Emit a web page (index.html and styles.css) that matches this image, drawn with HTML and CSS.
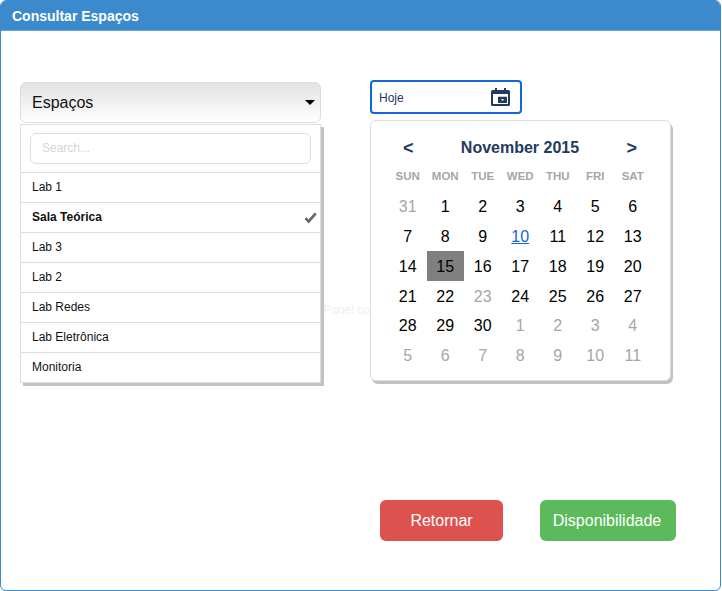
FILE: index.html
```html
<!DOCTYPE html>
<html>
	<head>
		<meta charset="utf-8">
		<title>Consultar Espaços</title>
		<link rel="stylesheet" href="styles.css">
	</head>
	<body>
		<div class="panel">
			<div class="panel-heading">Consultar Espaços</div>
			<div class="panel-body">
				<div class="top-row">
					<div class="left-col">
						<div class="select-btn">
							<span>Espaços</span>
							<span class="caret"></span>
						</div>
						<div class="select-menu">
							<div class="search-row">
								<div class="search-box">Search...</div>
							</div>
							<div class="opt">Lab 1</div>
							<div class="opt selected">
								Sala Teórica
								<svg class="check" width="13" height="12" viewBox="0 0 13 12"><path d="M0.500 7l2-1.800 2 2.200L10.800 .5l1.900 1.700-8 9.300z" fill="#666"/></svg>
							</div>
							<div class="opt">Lab 3</div>
							<div class="opt">Lab 2</div>
							<div class="opt">Lab Redes</div>
							<div class="opt">Lab Eletrônica</div>
							<div class="opt">Monitoria</div>
						</div>
					</div>
					<div class="behind">Panel content</div>
					<div class="right-col">
						<div class="date-input">
							<span>Hoje</span>
							<svg width="19" height="18" viewBox="0 0 19 18"><path d="M4 0h2v2h7V0h2v2h2.500A1.500 1.500 0 0 1 19 3.500v13a1.500 1.500 0 0 1-1.500 1.500h-16A1.500 1.500 0 0 1 0 16.500v-13A1.500 1.500 0 0 1 1.500 2H4zM2 6v10h15V6z" fill="#243a5e"/><path d="M7 8.700h9V15H7z" fill="#243a5e"/><path d="M10.500 11h2v1.500h-2z" fill="#fff"/></svg>
						</div>
						<div class="calendar">
							<div class="cal-head">
								<span class="nav">&lt;</span>
								<span class="month">November 2015</span>
								<span class="nav">&gt;</span>
							</div>
							<div class="cal-grid weekdays">
								<span>SUN</span><span>MON</span><span>TUE</span><span>WED</span><span>THU</span><span>FRI</span><span>SAT</span>
							</div>
							<div class="cal-grid days">
								<span class="off">31</span><span>1</span><span>2</span><span>3</span><span>4</span><span>5</span><span>6</span>
								<span>7</span><span>8</span><span>9</span><span class="today">10</span><span>11</span><span>12</span><span>13</span>
								<span>14</span><span class="picked">15</span><span>16</span><span>17</span><span>18</span><span>19</span><span>20</span>
								<span>21</span><span>22</span><span class="off">23</span><span>24</span><span>25</span><span>26</span><span>27</span>
								<span>28</span><span>29</span><span>30</span><span class="off">1</span><span class="off">2</span><span class="off">3</span><span class="off">4</span>
								<span class="off">5</span><span class="off">6</span><span class="off">7</span><span class="off">8</span><span class="off">9</span><span class="off">10</span><span class="off">11</span>
							</div>
						</div>
					</div>
				</div>
				<div class="actions">
					<button class="btn red">Retornar</button>
					<button class="btn green">Disponibilidade</button>
				</div>
			</div>
		</div>
	</body>
</html>
```

FILE: styles.css
```css
html, body {
	margin: 0;
	padding: 0;
	background: #ffffff;
}
body {
	font-family: "Liberation Sans", Arial, sans-serif;
	color: #000000;
}
.panel {
	width: 721px;
	height: 591px;
	box-sizing: border-box;
	border: 1px solid #3c8ace;
	border-radius: 6px;
	overflow: hidden;
	display: flex;
	flex-direction: column;
}
.panel-heading {
	height: 30px;
	box-sizing: border-box;
	background: #3c8ace;
	border-bottom: 1px solid #6aa6dc;
	color: #ffffff;
	font-size: 14px;
	font-weight: bold;
	line-height: 31px;
	padding-left: 11px;
	flex: none;
}
.panel-body {
	flex: 1;
	display: flex;
	flex-direction: column;
	padding: 49px 0 0 19px;
}
.top-row {
	display: flex;
	height: 420px;
}
.left-col {
	width: 301px;
	flex: none;
}
.select-btn {
	height: 41px;
	margin-top: 2px;
	box-sizing: border-box;
	border: 1px solid #dddddd;
	border-radius: 6px;
	background: linear-gradient(#e2e2e2, #ffffff);
	display: flex;
	align-items: center;
	justify-content: space-between;
	padding: 0 5px 0 11px;
	font-size: 16px;
	color: #111111;
}
.caret {
	width: 0;
	height: 0;
	border-left: 5px solid transparent;
	border-right: 5px solid transparent;
	border-top: 5px solid #000000;
}
.select-menu {
	margin-top: 1px;
	border: 1px solid #dddddd;
	box-shadow: 3px 3px 0 #c2c2c2;
	background: #ffffff;
	box-sizing: border-box;
}
.search-row {
	height: 47px;
	box-sizing: border-box;
	padding: 8px 9px 0 9px;
}
.search-box {
	height: 31px;
	box-sizing: border-box;
	border: 1px solid #dddddd;
	border-radius: 6px;
	padding-left: 11px;
	font-size: 12px;
	line-height: 29px;
	color: #d5d5d5;
}
.opt {
	height: 30px;
	box-sizing: border-box;
	border-top: 1px solid #dddddd;
	padding: 0 0 2px 11px;
	font-size: 12px;
	color: #111111;
	display: flex;
	align-items: center;
	justify-content: space-between;
}
.selected {
	font-weight: bold;
	padding-right: 3px;
}
.check {
	margin-top: 2px;
}
.behind {
	width: 49px;
	flex: none;
	box-sizing: border-box;
	padding-left: 2px;
	padding-top: 223px;
	font-size: 12px;
	color: #eeeeee;
	white-space: nowrap;
	overflow: hidden;
}
.date-input {
	width: 152px;
	height: 34px;
	box-sizing: border-box;
	border: 2px solid #1466dc;
	border-radius: 4px;
	display: flex;
	align-items: center;
	justify-content: space-between;
	padding: 2px 10px 0 7px;
	font-size: 12px;
	color: #243a5e;
}
.date-input svg {
	margin-top: -2px;
}
.calendar {
	width: 301px;
	height: 261px;
	margin-top: 6px;
	box-sizing: border-box;
	border: 1px solid #dddddd;
	border-radius: 6px;
	box-shadow: 2px 3px 0 #c2c2c2;
	padding: 0 19px 0 18px;
	background: #ffffff;
}
.cal-head {
	height: 54px;
	display: flex;
	align-items: center;
	justify-content: space-between;
	padding: 0 14px 0 14px;
	color: #243a5e;
	font-weight: bold;
	font-size: 16px;
}
.nav {
	font-size: 18px;
}
.cal-grid {
	display: grid;
	grid-template-columns: repeat(7, 37.5px);
	text-align: center;
}
.weekdays {
	font-size: 11.5px;
	font-weight: bold;
	color: #a6a6a6;
	height: 20px;
	line-height: 10px;
	margin-top: -4px;
}
.days {
	grid-template-rows: 30px 30px 30px 29px 30px 30px;
	font-size: 16px;
	line-height: 32px;
}
.off {
	color: #a6a6a6;
}
.today {
	color: #1466dc;
	text-decoration: underline;
}
.picked {
	background: #808080;
}
.actions {
	display: flex;
	gap: 37px;
	padding-left: 360px;
}
.btn {
	height: 41px;
	border: 0;
	border-radius: 6px;
	color: #ffffff;
	font-family: "Liberation Sans", Arial, sans-serif;
	font-size: 16px;
	padding: 0;
}
.red {
	width: 123px;
	background: #dd524e;
}
.green {
	width: 136px;
	padding-right: 2px;
	background: #5bba5c;
}
```
